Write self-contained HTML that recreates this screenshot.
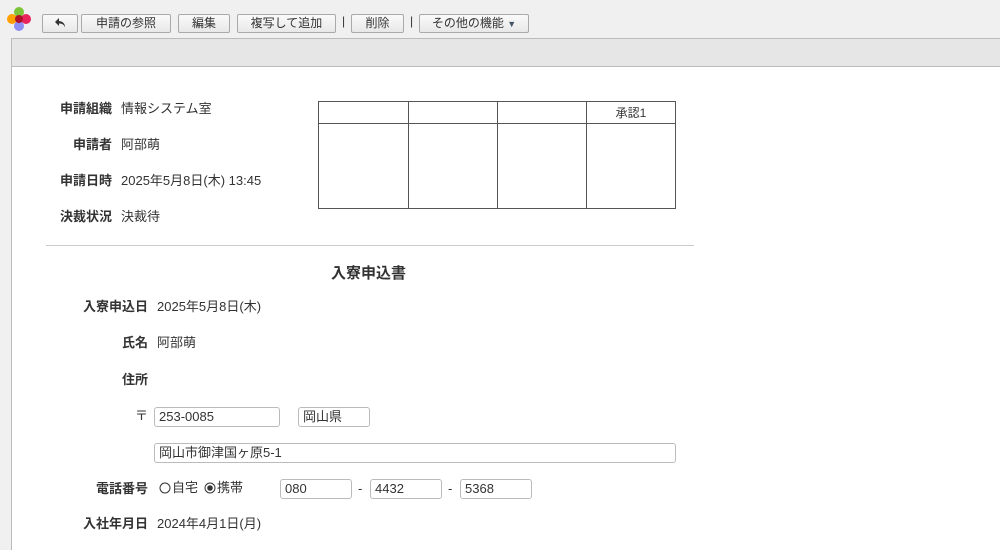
<!DOCTYPE html>
<html><head><meta charset="utf-8"><style>
*{box-sizing:border-box}
body{margin:0;width:1000px;height:550px;overflow:hidden;background:#f0f0f0;font-family:"Liberation Sans","Noto Sans CJK JP",sans-serif;font-size:13px;color:#333;position:relative}
.a{position:absolute;line-height:16px}
.btn{position:absolute;top:14px;height:19px;border:1px solid #aaa;border-radius:2px;background:linear-gradient(#fafafa,#e8e8e8);font-size:12px;text-align:center;line-height:17px;color:#333}
.sep{position:absolute;top:14px;font-size:12px;color:#333}
.lbl{position:absolute;font-weight:bold;text-align:right;color:#333;line-height:16px}
.inp{position:absolute;height:20px;border:1px solid #bbb;border-radius:3px;background:#fff;padding-left:4px;line-height:18px}
table{border-collapse:collapse}
td{border:1px solid #555;padding:0;font-size:12px}
</style></head><body>
<svg class="a" style="left:5px;top:5px" width="28" height="28" viewBox="0 0 28 28">
<circle cx="14" cy="7" r="5" fill="#7dc43a"/><circle cx="7" cy="14" r="5" fill="#ffa000"/><circle cx="21" cy="14" r="5" fill="#e8245c"/><circle cx="14" cy="21" r="5" fill="#8a8ef5"/><circle cx="14" cy="14" r="4" fill="#b0102a"/></svg>
<div class="btn" style="left:42px;width:36px"><svg width="12" height="12" viewBox="0 0 12 12" style="vertical-align:-2px"><path d="M5 1L1 5l4 4V6.5c3 0 5 1 6 4 0-4-2-6-6-6.5z" fill="#333"/></svg></div>
<div class="btn" style="left:81px;width:90px">申請の参照</div>
<div class="btn" style="left:178px;width:52px">編集</div>
<div class="btn" style="left:237px;width:99px">複写して追加</div>
<div class="sep" style="left:342px">|</div>
<div class="btn" style="left:351px;width:53px">削除</div>
<div class="sep" style="left:410px">|</div>
<div class="btn" style="left:419px;width:110px">その他の機能 <span style="font-size:9px;color:#456">▼</span></div>
<div class="a" style="left:11px;top:38px;width:989px;height:29px;background:#e6e6e6;border:1px solid #bbb;border-right:none"></div>
<div class="a" style="left:11px;top:66px;width:989px;height:484px;background:#fff;border-left:1px solid #bbb;border-top:1px solid #bbb"></div>

<div class="lbl" style="left:40px;top:101px;width:72px">申請組織</div><div class="a" style="left:121px;top:101px">情報システム室</div>
<div class="lbl" style="left:40px;top:137px;width:72px">申請者</div><div class="a" style="left:121px;top:137px">阿部萌</div>
<div class="lbl" style="left:40px;top:173px;width:72px">申請日時</div><div class="a" style="left:121px;top:173px">2025年5月8日(木) 13:45</div>
<div class="lbl" style="left:40px;top:209px;width:72px">決裁状況</div><div class="a" style="left:121px;top:209px">決裁待</div>
<table class="a" style="left:318px;top:101px;width:358px">
<tr style="height:22px"><td style="width:90px"></td><td style="width:89px"></td><td style="width:89px"></td><td style="text-align:center">承認1</td></tr>
<tr style="height:85px"><td></td><td></td><td></td><td></td></tr></table>
<div class="a" style="left:46px;top:245px;width:648px;border-top:1px solid #ccc"></div>
<div class="a" style="left:331px;top:265px;font-size:15px;font-weight:bold;line-height:18px">入寮申込書</div>

<div class="lbl" style="left:60px;top:299px;width:88px">入寮申込日</div><div class="a" style="left:157px;top:299px">2025年5月8日(木)</div>
<div class="lbl" style="left:60px;top:335px;width:88px">氏名</div><div class="a" style="left:157px;top:335px">阿部萌</div>
<div class="lbl" style="left:60px;top:372px;width:88px">住所</div>
<div class="lbl" style="left:60px;top:408px;width:88px;font-weight:normal">〒</div>
<div class="inp" style="left:154px;top:407px;width:126px">253-0085</div>
<div class="inp" style="left:298px;top:407px;width:72px">岡山県</div>
<div class="inp" style="left:154px;top:443px;width:522px">岡山市御津国ヶ原5-1</div>
<div class="lbl" style="left:60px;top:481px;width:88px">電話番号</div>
<svg class="a" style="left:159px;top:482px" width="12" height="12"><circle cx="6" cy="6" r="5" fill="none" stroke="#333"/></svg>
<div class="a" style="left:172px;top:480px">自宅</div>
<svg class="a" style="left:204px;top:482px" width="12" height="12"><circle cx="6" cy="6" r="5" fill="none" stroke="#333"/><circle cx="6" cy="6" r="2.8" fill="#333"/></svg>
<div class="a" style="left:217px;top:480px">携帯</div>
<div class="inp" style="left:280px;top:479px;width:72px">080</div>
<div class="a" style="left:358px;top:481px">-</div>
<div class="inp" style="left:370px;top:479px;width:72px">4432</div>
<div class="a" style="left:448px;top:481px">-</div>
<div class="inp" style="left:460px;top:479px;width:72px">5368</div>
<div class="lbl" style="left:60px;top:516px;width:88px">入社年月日</div><div class="a" style="left:157px;top:516px">2024年4月1日(月)</div>
</body></html>
